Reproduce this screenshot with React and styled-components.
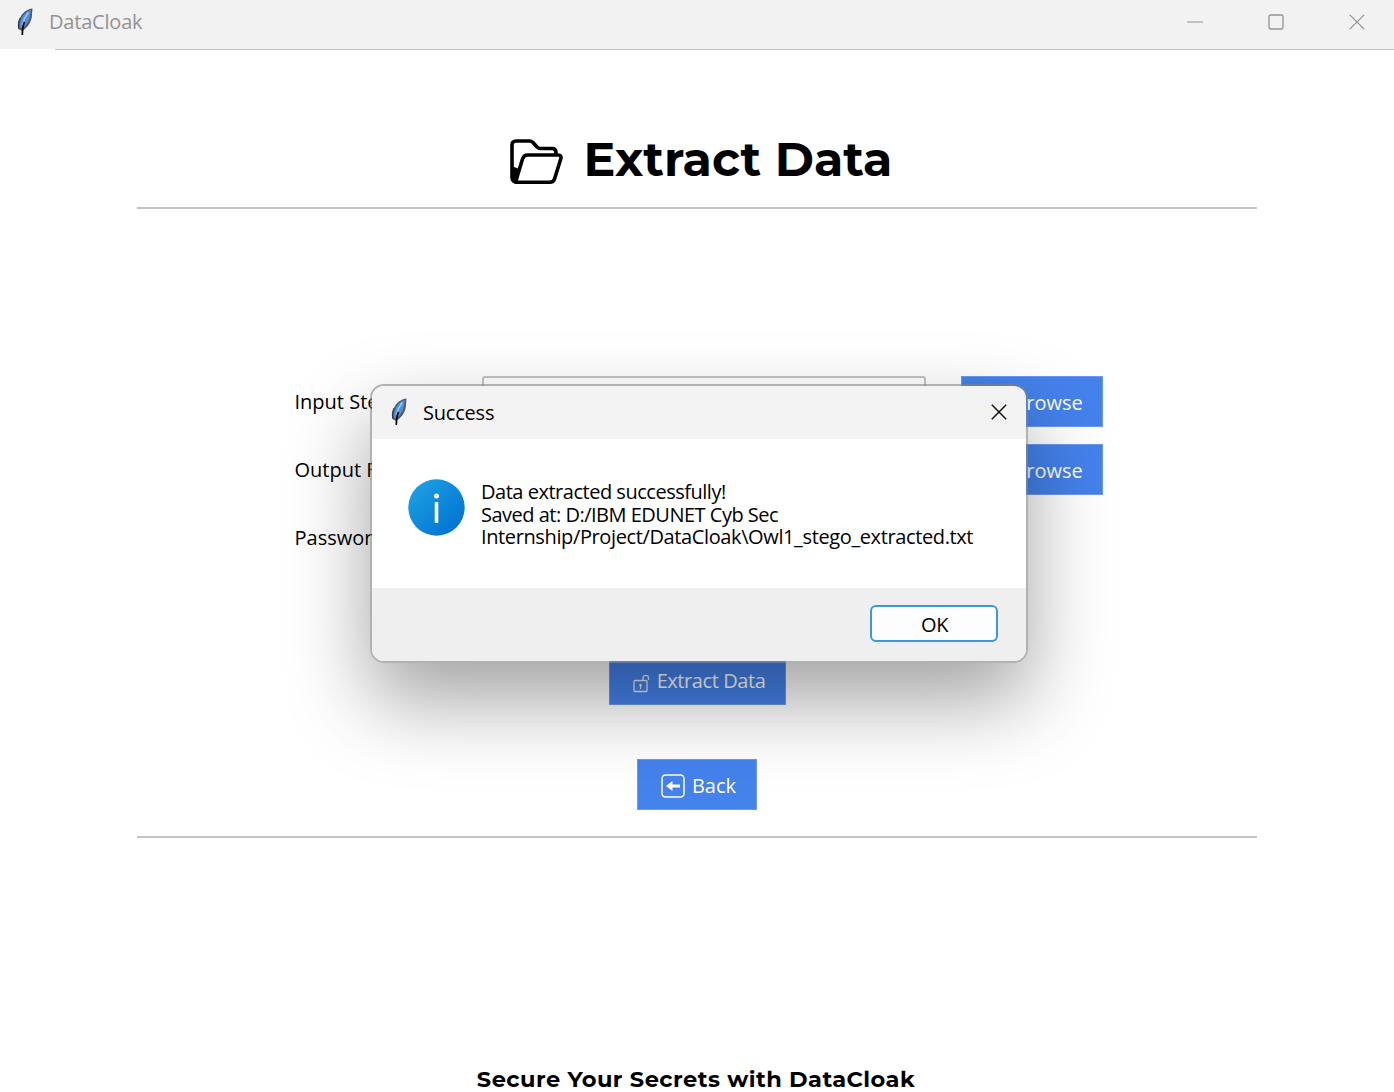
import React from "react";
import styled, { createGlobalStyle } from "styled-components";

const Global = createGlobalStyle`
  * { box-sizing: border-box; }
  body { margin: 0; background: #fff; overflow: hidden; }
`;

const Window = styled.div`
  position: relative;
  display: flex;
  flex-direction: column;
  width: 1394px;
  height: 1092px;
  overflow: hidden;
  background: #fff;
  color: #000;
  font-family: "Open Sans", "Noto Sans", sans-serif;
`;

const TitleBar = styled.header`
  display: flex;
  align-items: center;
  flex: none;
  height: 49px;
  padding: 0 29.5px 6px 16px;
  background: #f2f2f2;
`;

const TitleRule = styled.div`
  flex: none;
  height: 1px;
  margin-left: 55px;
  background: #c3c3c3;
`;

const Label = styled.span`
  display: inline-block;
  white-space: pre;
  font-size: ${(p) => p.$size || 20}px;
  line-height: ${(p) => p.$line || 28}px;
  letter-spacing: ${(p) => p.$track || 0}px;
  color: ${(p) => p.$color || "inherit"};
`;

const AppName = styled(Label)`
  flex: 1;
  margin: 1px 0 0 15px;
`;

const Controls = styled.div`
  display: flex;
  gap: 65px;
`;

const Page = styled.main`
  display: flex;
  flex-direction: column;
  align-items: center;
  flex: 1;
`;

const Heading = styled.h1`
  display: flex;
  align-items: center;
  gap: 21px;
  height: 66px;
  width: 384px;
  margin: 76px 0 0 9px;
  font-family: Montserrat, Inter, sans-serif;
  font-weight: 700;

  svg {
    margin-top: 6px;
  }
`;

const Rule = styled.hr`
  width: 1120px;
  height: 2px;
  margin: ${(p) => p.$top}px 0 0;
  border: 0;
  background: #c4c4c4;
`;

const Form = styled.div`
  display: grid;
  grid-template-columns: 187px 444px 177px;
  grid-template-rows: repeat(3, 51px);
  row-gap: 17px;
  width: 808px;
  margin-top: 167px;
  margin-left: 3px;
  align-items: center;
`;

const FieldName = styled(Label)`
  padding-top: 1px;
`;

const Entry = styled.div`
  height: 51px;
  border: 2px solid #c4c4c4;
  border-radius: 3px;
  background: #fff;
`;

const Button = styled.button`
  display: flex;
  align-items: center;
  justify-content: center;
  gap: 7px;
  width: ${(p) => p.$w}px;
  height: 51px;
  margin: ${(p) => p.$m || 0};
  padding: 2px 0 0 ${(p) => p.$shift || 0}px;
  border: 1px solid #6a9bf0;
  background: #4582ec;
  color: #fff;
  font: inherit;
`;

const Footer = styled.footer`
  margin: 224px 2px 0 0;
  font-family: Montserrat, Inter, sans-serif;
  font-weight: 700;
`;

const Dialog = styled.section`
  position: absolute;
  left: 370px;
  top: 384px;
  display: flex;
  flex-direction: column;
  width: 658px;
  height: 279px;
  border: 2px solid rgba(125, 125, 125, 0.6);
  background-clip: padding-box;
  border-radius: 14px;
  box-shadow: 0 37px 82px rgba(0, 0, 0, 0.37);
  overflow: hidden;
`;

const DialogTitle = styled.div`
  display: flex;
  align-items: center;
  flex: none;
  height: 53px;
  padding: 0 19.5px 2px 18px;
  background: #f3f3f3;
`;

const DialogName = styled(Label)`
  flex: 1;
  margin: 2px 0 0 15px;
`;

const DialogBody = styled.div`
  display: flex;
  flex: none;
  height: 149px;
  padding: 40px 0 0 36px;
  background: #fff;
  gap: 16px;
`;

const Message = styled.div`
  display: flex;
  flex-direction: column;
  padding-top: 2px;
`;

const DialogFooter = styled.div`
  display: flex;
  flex: 1;
  justify-content: flex-end;
  padding: 17px 28px 0 0;
  background: #efefef;
`;

const OkButton = styled.button`
  width: 128px;
  height: 37px;
  padding: 2px 0 0 1px;
  border: 2px solid #3c97dc;
  border-radius: 6px;
  background: #fdfdfd;
  font: inherit;
  color: #000;
`;

function Feather() {
  return (
    <svg width="18" height="28" viewBox="0 0 18 28">
      <path d="M16.500 .5C11 1 6 5 4 10c-2 4-2.500 8-1.500 11L6 23c5-3 9-8 9.800-14z" fill="#55595e" />
      <path d="M14.800 2C10.500 3 7 6.500 5.300 11c-1.500 3.500-1.800 6-1.200 8.500l2 1.300C10 18 13.300 13 14 8z" fill="#4a8fe2" />
      <path d="M12.300 4.500C9.500 8 7.500 12 6.200 17" stroke="#9ac8f7" strokeWidth="1.600" fill="none" />
      <path d="M4 10c-2 4-2 8-1 11" stroke="#2a2d31" strokeWidth=".9" fill="none" />
      <path d="M8.500 14C7 17 6.500 20 6.300 27" stroke="#050505" strokeWidth="1.700" fill="none" />
    </svg>
  );
}

function Close({ color, width = 1.2 }) {
  return (
    <svg width="16" height="16" viewBox="0 0 16 16">
      <path d="M.8.8l14.4 14.4M15.2.8L.8 15.2" stroke={color} strokeWidth={width} />
    </svg>
  );
}

function Folder({ width = 53, height = 46, color = "#000" }) {
  return (
    <svg width={width} height={height} viewBox="0 0 53 46" fill="none" stroke={color} strokeWidth="3.6" strokeLinejoin="round">
      <path d="M5 43C3 42 2 40.500 2 38V6c0-2.500 1.500-4 4-4h13.500c1.500 0 2.500.5 3.500 1.500l4 4.500c1 1 2 1.500 3.500 1.500H42c2.500 0 4 1.500 4 4v2" />
      <path d="M5.500 43.200L12.500 20c1-3 2.500-4 5-4H48c2.500 0 3.500 1.500 2.800 3.800L44.500 40c-.8 2.400-2 3.300-4.500 3.300z" />
      <path d="M2 27v12l3 3 4-12z" fill={color} stroke="none" />
    </svg>
  );
}

const LockIcon = styled.svg`
  margin-top: 5px;
`;

function Lock() {
  return (
    <LockIcon width="17" height="19" viewBox="0 0 17 19" fill="none" stroke="#fff" strokeOpacity=".85" strokeWidth="1.3">
      <rect x="1" y="6.500" width="13" height="11" rx="1" />
      <path d="M10 6V4c0-3.500 5.500-3.500 5.500 0v2" />
      <path d="M7.500 10v5M6.300 11h2.400" />
    </LockIcon>
  );
}

function BackArrow() {
  return (
    <svg width="24" height="24" viewBox="0 0 24 24">
      <rect x="1" y="1" width="22" height="22" rx="3.500" fill="none" stroke="#fff" strokeWidth="1.5" />
      <path d="M5 12l6.500-5v3.500H19v3h-7.500V17z" fill="#fff" />
    </svg>
  );
}

function Info() {
  return (
    <svg width="57" height="57" viewBox="0 0 57 57">
      <defs>
        <linearGradient id="info" x1="0" y1="0" x2="1" y2="1">
          <stop offset=".1" stopColor="#1d9fe2" />
          <stop offset=".9" stopColor="#0072d2" />
        </linearGradient>
      </defs>
      <circle cx="28.500" cy="28.500" r="28.200" fill="url(#info)" />
      <circle cx="28.500" cy="17" r="2.500" fill="#fff" />
      <rect x="26.700" y="23" width="3.600" height="21" rx="1" fill="#fff" />
    </svg>
  );
}

function BrowseButton() {
  return (
    <Button $w={142} $m="0 0 0 35px">
      <Folder width={26} height={22} color="#fff" />
      <Label>Browse</Label>
    </Button>
  );
}

export default function App() {
  return (
    <Window>
      <Global />
      <TitleBar>
        <Feather />
        <AppName $color="#929292" $track={-0.2}>DataCloak</AppName>
        <Controls>
          <svg width="16" height="16"><path d="M0 8h16" stroke="#929292" /></svg>
          <svg width="16" height="16"><rect x="1" y="1" width="14" height="14" rx="1.500" fill="none" stroke="#929292" strokeWidth="1.300" /></svg>
          <Close color="#929292" />
        </Controls>
      </TitleBar>
      <TitleRule />
      <Page>
        <Heading>
          <Folder />
          <Label $size={47.5} $line={60}>Extract Data</Label>
        </Heading>
        <Rule $top={15} />
        <Form>
          <FieldName>Input Stego File:</FieldName>
          <Entry />
          <BrowseButton />
          <FieldName>Output Folder:</FieldName>
          <Entry />
          <BrowseButton />
          <FieldName>Password:</FieldName>
          <Entry />
        </Form>
        <Button $w={177} $m="91px 0 0 1px" $shift={3}><Lock /><Label $track={-0.42}>Extract Data</Label></Button>
        <Button $w={120} $m="54px 0 0 0" $shift={3}><BackArrow /><Label>Back</Label></Button>
        <Rule $top={26} />
        <Footer><Label $size={22.5} $line={34} $track={0.46}>Secure Your Secrets with DataCloak</Label></Footer>
      </Page>
      <Dialog>
        <DialogTitle>
          <Feather />
          <DialogName $track={-0.2}>Success</DialogName>
          <Close color="#111" width={1.5} />
        </DialogTitle>
        <DialogBody>
          <Info />
          <Message>
            <Label $line={22.7} $track={-0.48}>Data extracted successfully!</Label>
            <Label $line={22.7} $track={-0.5}>Saved at: D:/IBM EDUNET Cyb Sec</Label>
            <Label $line={22.7} $track={-0.38}>Internship/Project/DataCloak\Owl1_stego_extracted.txt</Label>
          </Message>
        </DialogBody>
        <DialogFooter><OkButton><Label $track={-0.4}>OK</Label></OkButton></DialogFooter>
      </Dialog>
    </Window>
  );
}
